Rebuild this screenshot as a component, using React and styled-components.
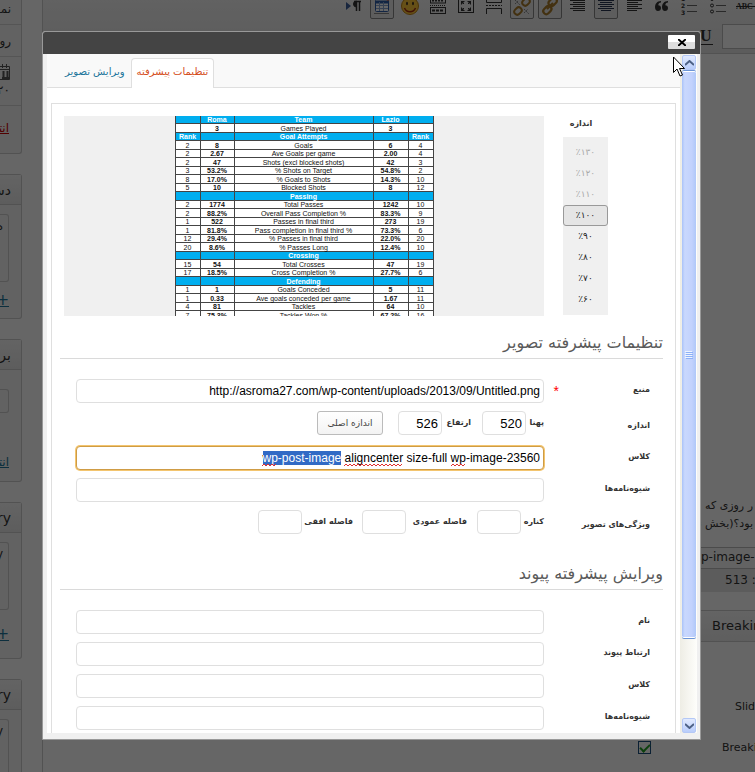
import React, { useEffect, useRef } from "react";
import styled, { createGlobalStyle } from "styled-components";

const Global = createGlobalStyle`
  * { box-sizing: border-box; }
  html, body, #root { height: 100%; }
  body { margin: 0; background: #fff; overflow: hidden; font-family: "DejaVu Sans", sans-serif; font-size: 12px; color: #333; }
  button, input { font: inherit; }
`;

const latin = `"Liberation Sans", Arial, sans-serif`;
const line = "#dfdfdf";

/* ---------- page behind the dialog ---------- */
const Page = styled.div`
  display: flex;
  height: 100vh;
  overflow: hidden;
`;
const Side = styled.aside`
  flex: none;
  width: 22px;
  margin-right: 20px;
  overflow: hidden;
  direction: rtl;
  white-space: nowrap;
`;
const MetaBox = styled.section`
  height: ${(p) => p.$h}px;
  margin-top: ${(p) => (p.$cut ? -7 : 0)}px;
  margin-bottom: 20px;
  border: 1px solid #ccc;
  border-left: 0;
  border-top-width: ${(p) => (p.$cut ? 0 : 1)}px;
  border-radius: ${(p) => (p.$cut ? "0 0 3px 0" : "0 3px 3px 0")};
  background: #f5f5f5;
`;
const MetaTitle = styled.h3`
  margin: 0 0 9px;
  height: 30px;
  padding-right: 10px;
  font-size: 14px;
  font-weight: 400;
  line-height: 30px;
  border-bottom: 1px solid #ccc;
  background: linear-gradient(#f9f9f9, #e8e8e8);
`;
const MetaRow = styled.div`
  height: 32px;
  padding-right: 10px;
  line-height: 32px;
  border-bottom: 1px solid #d5d5d5;
`;
const DateRow = styled.div`
  display: flex;
  flex-direction: column;
  height: 49px;
  padding: 6px 11px 0 0;
  line-height: 18px;
  border-bottom: 1px solid #d5d5d5;
`;
const MetaPane = styled.div`
  height: ${(p) => p.$h}px;
  margin: ${(p) => p.$top || 0}px 12px 0 0;
  padding: 2px 5px;
  line-height: 18px;
  border: 1px solid #ccc;
  border-left: 0;
  border-radius: 0 3px 3px 0;
`;
const MetaLink = styled.a`
  display: block;
  padding: ${(p) => p.$top}px 12px 0;
  font-size: ${(p) => (p.$add ? 15 : 12)}px;
  line-height: 20px;
  color: ${(p) => (p.$red ? "#c00" : "#21759b")};
`;
const Main = styled.main`
  flex: 1;
  min-width: 0;
  display: flex;
  flex-direction: column;
  overflow: hidden;
  border-left: 1px solid #ccc;
`;
const Toolbars = styled.div`
  flex: none;
  height: 54px;
  background: linear-gradient(#f4f4f4, #e6e6e6);
  border-bottom: 1px solid #ccc;
`;
const ToolRow = styled.div`
  display: flex;
  gap: 4px;
  height: 19px;
  padding-left: 299px;
  align-items: flex-end;
`;
const Tool = styled.button`
  flex: none;
  display: grid;
  place-items: center;
  width: 24px;
  height: 24px;
  padding: 0;
  border: 1px solid ${(p) => (p.$on ? "#888" : "transparent")};
  border-radius: 2px;
  background: ${(p) => (p.$on ? "#e9e9e9" : "none")};
  svg { display: block; }
`;
const ToolRowTwo = styled.div`
  display: flex;
  justify-content: flex-end;
  gap: 4px;
  padding-top: 5px;
`;
const FormatBox = styled.div`
  width: 33px;
  height: 25px;
  border: 1px solid #bbb;
  border-right: 0;
  background: #fff;
`;
const Story = styled.div`
  flex: none;
  height: 493px;
  padding: 443px 2px 0 0;
  direction: rtl;
  font-size: 11px;
  line-height: 18px;
  white-space: nowrap;
`;
const Strip = styled.div`
  flex: none;
  height: ${(p) => p.$h}px;
  padding-left: ${(p) => p.$x}px;
  border-top: 1px solid #bbb;
  background: ${(p) => p.$bg};
  font-size: 12px;
  line-height: ${(p) => p.$h - 2}px;
  white-space: nowrap;
`;
const PanelTitle = styled.h3`
  flex: none;
  margin: 18px 0 44px;
  height: 32px;
  padding-left: 669px;
  border: solid #ccc;
  border-width: 1px 0;
  background: linear-gradient(#f9f9f9, #ececec);
  font-size: 13px;
  font-weight: 400;
  line-height: 30px;
`;
const Option = styled.label`
  flex: none;
  display: flex;
  align-items: center;
  height: 41px;
  padding-left: ${(p) => p.$x}px;
  font-size: 11px;
  white-space: nowrap;
`;
const Tick = styled.input`
  flex: none;
  margin: 0 71px 0 0;
  width: 13px;
  height: 13px;
  appearance: none;
  border: 1px solid #1c5180;
  background: #fff;
  display: grid;
  place-items: center;
  &:checked::before {
    content: "";
    width: 4px;
    height: 8px;
    margin-top: -2px;
    border: solid #21a121;
    border-width: 0 2px 2px 0;
    transform: rotate(45deg);
  }
`;
const Shade = styled.div`
  position: fixed;
  inset: 0;
  background: rgba(0, 0, 0, 0.6);
`;

/* ---------- dialog ---------- */
const Dialog = styled.div`
  position: fixed;
  inset: 31px 54px 32px 42px;
  display: flex;
  flex-direction: column;
  border: 1px solid #999;
  border-radius: 3px 3px 0 0;
  background: #f0f0f0;
  overflow: hidden;
`;
const TitleBar = styled.div`
  flex: none;
  display: flex;
  justify-content: flex-end;
  height: 22px;
  padding: 3px 5px;
  background: #444;
`;
const Close = styled.button`
  display: grid;
  place-items: center;
  width: 27px;
  height: 14px;
  padding: 0;
  border: 0;
  border-radius: 1px;
  background: linear-gradient(#fff 50%, #dedede 50%);
`;
const Frame = styled.div`
  flex: 1;
  min-height: 0;
  display: flex;
  margin: 0 3px 6px 4px;
  background: #fff;
`;
const Content = styled.div`
  flex: 1;
  min-width: 0;
  overflow: hidden;
`;
const Tabs = styled.nav`
  display: flex;
  align-items: flex-end;
  height: 34px;
  padding-left: 12px;
  border-bottom: 1px solid ${line};
  background: #f9f9f9;
`;
const Tab = styled.a`
  height: ${(p) => (p.$on ? 30 : 29)}px;
  margin-bottom: ${(p) => (p.$on ? -1 : 0)}px;
  padding: 0 5px;
  font-size: 10px;
  line-height: 26px;
  text-decoration: none;
  white-space: nowrap;
  color: ${(p) => (p.$on ? "#d54e21" : "#21759b")};
  border: 1px solid ${(p) => (p.$on ? line : "transparent")};
  border-bottom: 0;
  border-radius: 4px 4px 0 0;
  background: ${(p) => (p.$on ? "#fff" : "none")};
`;
const Panel = styled.div`
  margin: 15px 4px 0;
  border: 1px solid ${line};
`;
const Preview = styled.div`
  display: flex;
  gap: 19px;
  padding: 12px 12px 0;
`;
const Picture = styled.div`
  flex: 0 1 480px;
  height: 200px;
  overflow: hidden;
  background: #f0f0f0;
`;
const Stats = styled.table`
  width: 258px;
  height: 204px;
  margin: 0 auto;
  table-layout: fixed;
  border-collapse: collapse;
  background: #fff;
  font: 7px/7px ${latin};
  color: #111;
  text-align: center;
  td, th { padding: 0; border: 1px solid #444; white-space: nowrap; font-weight: 400; }
  tr:first-child > * { border-top: 0; }
  td:nth-child(2), td:nth-child(4) { font-weight: 700; }
`;
const Band = styled.tr`
  background: #00aeef;
  th { color: #fff; font-weight: 700; }
`;
const Sizes = styled.div`
  width: 45px;
  text-align: center;
`;
const SizesTitle = styled.div`
  height: 21px;
  padding-right: 9px;
  font-size: 8px;
  font-weight: 700;
  line-height: 16px;
  white-space: nowrap;
`;
const SizeList = styled.div`
  display: flex;
  flex-direction: column;
  padding: 5px 0;
  background: #f0f0f0;
`;
const Size = styled.button`
  height: 21px;
  padding: 0;
  border: 1px solid ${(p) => (p.$on ? "#999" : "transparent")};
  border-radius: 3px;
  background: ${(p) => (p.$on ? "#e5e5e5" : "none")};
  color: ${(p) => (p.disabled ? "#aaa" : "#222")};
  font-size: 9px;
  line-height: 17px;
`;
const Section = styled.form`
  direction: rtl;
  margin: ${(p) => p.$top}px 12px 0 8px;
`;
const Heading = styled.h2`
  margin: 0 0 20px;
  height: 32px;
  font-size: 16px;
  font-weight: 400;
  line-height: 32px;
  color: #5a5a5a;
  border-bottom: 1px solid #dadada;
`;
const Row = styled.div`
  display: grid;
  grid-template-columns: 90px 16px minmax(0, 1fr);
  align-items: start;
  height: ${(p) => (p.$tall ? 35 : 32)}px;
  padding: 0 13px 0 16px;
`;
const Label = styled.label`
  font-size: 8px;
  font-weight: 700;
  line-height: ${(p) => (p.$low ? 30 : 22)}px;
  color: #333;
  white-space: nowrap;
`;
const Star = styled.span`
  padding-right: 1px;
  color: #f00;
  font: 14px/24px ${latin};
`;
const Field = styled.input`
  display: block;
  width: 100%;
  height: 24px;
  padding: 0 3px;
  direction: ltr;
  text-align: right;
  font: 12px/18px ${latin};
  color: #000;
  background: #fff;
  border: 1px solid ${line};
  border-radius: 4px;
  outline: 0;
  &:focus { border-color: #cf9c45; box-shadow: 0 0 0 1px #f3c56f; }
  &::selection { background: #316ac5; color: #fff; }
`;
const Small = styled(Field)`
  flex: none;
  width: 44px;
  margin-left: ${(p) => p.$after}px;
  font-size: 13px;
`;
const Group = styled.div`
  display: flex;
`;
const Caption = styled.label`
  flex: none;
  width: ${(p) => p.$w}px;
  font-size: 8px;
  font-weight: 700;
  line-height: 24px;
  white-space: nowrap;
`;
const Original = styled.button`
  flex: none;
  width: 66px;
  height: 24px;
  padding: 0;
  border: 1px solid #bbb;
  border-radius: 3px;
  background: linear-gradient(#fff, #f3f3f3);
  color: #444;
  font-size: 9px;
  white-space: nowrap;
`;
const Spelled = styled.div`
  position: relative;
`;
const Squiggle = styled.svg`
  position: absolute;
  right: 4px;
  top: 17px;
  pointer-events: none;
`;

/* ---------- scroll bar ---------- */
const Bar = styled.div`
  flex: none;
  display: flex;
  flex-direction: column;
  width: 17px;
  padding: 1px 1px 0 2px;
  background: linear-gradient(90deg, #eeede5, #fefefb);
`;
const Arrow = styled.button`
  flex: none;
  display: grid;
  place-items: center;
  height: 15px;
  padding: 0;
  border: 1px solid #b4c8f6;
  border-radius: 2px;
  background: linear-gradient(#e1eafe, #b9cdfb);
`;
const Thumb = styled.div`
  flex: 0 1 569px;
  display: grid;
  place-items: center;
  margin-bottom: auto;
  border: solid #6c95d6;
  border-width: 1px 0;
  border-radius: 2px;
  box-shadow: inset 0 1px #fff, inset 0 -1px #fff;
  background: linear-gradient(90deg, #a9c2f8, #c9d8fd 20%, #c2d2fd 70%, #b0c8f8);
`;
const Pointer = styled.svg`
  position: fixed;
  top: 56px;
  right: 70px;
`;

const lines = (rows) => rows.map(([x1, x2, y]) => `M${x1} ${y}.5H${x2}`).join("");
const Icon = ({ children }) => (
  <svg width="20" height="20" viewBox="0 0 20 20" fill="none" stroke="#333">{children}</svg>
);
const align = (rows, color = "#333") => <path stroke={color} d={lines(rows)} />;
const chain = (
  <g stroke="#a87c2c" strokeWidth="2" fill="none">
    <rect x="10" y="2" width="8" height="6" rx="3" transform="rotate(-45 14 5)" />
    <rect x="2" y="11" width="8" height="6" rx="3" transform="rotate(-45 6 14)" />
  </g>
);
const quoteMark = (x) => `M${x + 5} 4c-4 0-6 3-6 6 0 2.500 1.200 4 3 4s3-1.200 3-3-1.200-2.700-2.700-2.700c0-1.500 1-2.500 2.700-2.700z`;

const tools = [
  ["Direction", false, <><path d="M2 5l5 4-5 4z" fill="#3d5f9c" stroke="none" /><path d="M12.500 4v10M15.500 4v10M10 4.500h7" strokeWidth="1.500" /><path d="M12.500 4a3 3 0 000 6z" fill="#333" /></>],
  ["Table", true, <><rect x="3.500" y="2.500" width="13" height="12" rx="1" fill="#fff" stroke="#2f5ea8" /><path d="M4 5h12" stroke="#2f5ea8" strokeWidth="3" /><path d="M4 8.500h12M4 11.500h12M7.500 5v9M11.500 5v9" stroke="#8aa6d0" /><path d="M13 2l3-4 3 2-3 4z" fill="#d65332" stroke="none" /><path d="M2 16.500h15" stroke="#888" /></>],
  ["Smiley", false, <><circle cx="10" cy="9" r="8.500" fill="#ffc83a" stroke="#c08415" /><ellipse cx="7" cy="6.500" rx="1" ry="1.800" fill="#432" stroke="none" /><ellipse cx="13" cy="6.500" rx="1" ry="1.800" fill="#432" stroke="none" /><path d="M4.500 11c2 5 9 5 11 0" stroke="#a02b10" strokeWidth="1.500" /></>],
  ["Row", false, <><rect x="2.500" y="-1" width="15" height="7" /><rect x="2.500" y="10.500" width="15" height="6" /><path d="M4 3.500h12" strokeDasharray="2 1" strokeWidth="2" /><path d="M2 8.500h16" strokeDasharray="1 1" /><path d="M4 13.500h12" strokeDasharray="3 1" strokeWidth="2" /></>],
  ["Fullscreen", false, <><rect x="2.500" y="1.500" width="15" height="14" /><path d="M5 4h4l-4 4zM15 4h-4l4 4zM5 14h4l-4-4zM15 14h-4l4-4z" fill="#333" stroke="none" /><path d="M6 5l2 2M14 5l-2 2M6 13l2-2M14 13l-2-2" /></>],
  ["Page break", false, <><path d="M2.500 0v5.500h15V0M2.500 17v-5.500h15V17" /><path d="M2 8.500h16" strokeDasharray="2 1" /></>],
  ["Unlink", true, <>{chain}<path d="M3 3l5 5M3 7l3-3M12 12l5 5M12 16l4-4" stroke="#888" strokeDasharray="2 1" /></>],
  ["Link", true, <><g stroke="#a87c2c" strokeWidth="2.200"><rect x="9" y="2" width="9" height="6" rx="3" transform="rotate(-45 13 6)" /><rect x="2" y="10" width="9" height="6" rx="3" transform="rotate(-45 7 12)" /><path d="M7 12l6-6" /></g></>],
  ["Align right", false, align([[5, 17, 1], [2, 17, 3], [5, 17, 5], [2, 17, 7], [5, 17, 9], [2, 17, 11], [5, 17, 13]])],
  ["Align center", true, align([[4, 16, 1], [2, 18, 3], [4, 16, 5], [2, 18, 7], [4, 16, 9], [2, 18, 11], [5, 15, 13]], "#2a3550")],
  ["Align left", false, align([[3, 14, 1], [3, 18, 3], [3, 14, 5], [3, 18, 7], [3, 14, 9], [3, 18, 11], [3, 13, 13]])],
  ["Quote", false, <path d={quoteMark(4) + quoteMark(11)} fill="#333" stroke="none" />],
  ["Numbered list", false, <><path d="M7 2.500h10M7 8.500h10M7 14.500h10" stroke="#666" /><g fill="#333" stroke="none" fontFamily="DejaVu Sans" fontSize="6" fontWeight="700"><text x="1" y="4">1</text><text x="1" y="11">2</text><text x="1" y="18">3</text></g></>],
  ["Bulleted list", false, <><path d="M8 2.500h10M8 8.500h10M8 14.500h10" stroke="#666" /><circle cx="4" cy="2" r="1.500" /><circle cx="4" cy="8.500" r="1.500" /><circle cx="4" cy="14.500" r="1.500" /></>],
  ["Strikethrough", false, <><text x="0" y="12" fill="#333" stroke="none" fontFamily="Liberation Serif" fontSize="8" fontWeight="700">ABC</text><path d="M0 9.500h20" /></>],
];

const stats = [
  ["h", "", "Roma", "Team", "Lazio", ""],
  ["r", "", "3", "Games Played", "3", ""],
  ["h", "Rank", "", "Goal Attempts", "", "Rank"],
  ["r", "2", "8", "Goals", "6", "4"],
  ["r", "2", "2.67", "Ave Goals per game", "2.00", "4"],
  ["r", "2", "47", "Shots (excl blocked shots)", "42", "3"],
  ["r", "3", "53.2%", "% Shots on Target", "54.8%", "2"],
  ["r", "8", "17.0%", "% Goals to Shots", "14.3%", "10"],
  ["r", "5", "10", "Blocked Shots", "8", "12"],
  ["h", "", "", "Passing", "", ""],
  ["r", "2", "1774", "Total Passes", "1242", "10"],
  ["r", "2", "88.2%", "Overall Pass Completion %", "83.3%", "9"],
  ["r", "1", "522", "Passes in final third", "273", "19"],
  ["r", "1", "81.8%", "Pass completion in final third %", "73.3%", "6"],
  ["r", "12", "29.4%", "% Passes in final third", "22.0%", "20"],
  ["r", "20", "8.6%", "% Passes Long", "12.4%", "10"],
  ["h", "", "", "Crossing", "", ""],
  ["r", "15", "54", "Total Crosses", "47", "19"],
  ["r", "17", "18.5%", "Cross Completion %", "27.7%", "6"],
  ["h", "", "", "Defending", "", ""],
  ["r", "1", "1", "Goals Conceded", "5", "11"],
  ["r", "1", "0.33", "Ave goals conceded per game", "1.67", "11"],
  ["r", "4", "81", "Tackles", "64", "10"],
  ["r", "7", "75.3%", "Tackles Won %", "67.2%", "16"],
];

const sizes = ["۱۳۰", "۱۲۰", "۱۱۰", "۱۰۰", "۹۰", "۸۰", "۷۰", "۶۰"];

const wave = (from, to) => {
  let d = `M${from} 3`;
  for (let x = from + 2, up = true; x <= to; x += 2, up = !up) d += `L${x} ${up ? 1 : 3}`;
  return d;
};

function StatsTable() {
  return (
    <Stats>
      <colgroup><col width="25" /><col width="34" /><col width="139" /><col width="35" /><col width="25" /></colgroup>
      <tbody>
        {stats.map(([kind, ...cells], i) =>
          kind === "h"
            ? <Band key={i}>{cells.map((c, j) => <th key={j}>{c}</th>)}</Band>
            : <tr key={i}>{cells.map((c, j) => <td key={j}>{c}</td>)}</tr>
        )}
      </tbody>
    </Stats>
  );
}

function TextRow({ id, label, value = "", required }) {
  return (
    <Row>
      <Label htmlFor={id}>{label}</Label>
      <Star>{required ? "*" : ""}</Star>
      <Field id={id} defaultValue={value} />
    </Row>
  );
}

function ClassRow() {
  const ref = useRef(null);
  useEffect(() => {
    ref.current.focus();
    ref.current.setSelectionRange(0, 13);
  }, []);
  return (
    <Row>
      <Label htmlFor="img-class">کلاس</Label>
      <Star />
      <Spelled>
        <Field id="img-class" ref={ref} spellCheck={false} defaultValue="wp-post-image aligncenter size-full wp-image-23560" />
        <Squiggle width="278" height="4" viewBox="0 0 278 4" fill="none" stroke="#e03030">
          <path d={wave(0, 15) + wave(82, 141) + wave(189, 204)} />
        </Squiggle>
      </Spelled>
    </Row>
  );
}

function Backdrop() {
  return (
    <Page>
      <Side>
        <MetaBox $h={161} $cut>
          <MetaRow>نما</MetaRow>
          <MetaRow>روز</MetaRow>
          <DateRow>
            <svg width="16" height="18" viewBox="0 0 16 18" fill="none" stroke="#555"><path d="M1.500 3.500h14v13h-14zM4.500 1v4M8.500 1v4M12.500 1v4M2 6.500h13" /><path d="M9.500 8v7M13.500 8v7M8 15h7" strokeWidth="2" /></svg>
            <span>۲۰ آ</span>
          </DateRow>
          <MetaLink href="#trash" $top={12} $red>انتقال</MetaLink>
        </MetaBox>
        <MetaBox $h={145}>
          <MetaTitle>دسته</MetaTitle>
          <MetaPane $h={68}>ه</MetaPane>
          <MetaLink href="#add" $top={8} $add>+</MetaLink>
        </MetaBox>
        <MetaBox $h={143}>
          <MetaTitle>برچ</MetaTitle>
          <MetaPane $h={24} $top={19} />
          <MetaLink href="#tags" $top={39}>انتخاب</MetaLink>
        </MetaBox>
        <MetaBox $h={157}>
          <MetaTitle>ry</MetaTitle>
          <MetaPane $h={68}>y</MetaPane>
          <MetaLink href="#add-one" $top={14} $add>+</MetaLink>
        </MetaBox>
        <MetaBox $h={157}>
          <MetaTitle>ry</MetaTitle>
          <MetaPane $h={68}>y</MetaPane>
        </MetaBox>
      </Side>
      <Main>
        <Toolbars>
          <ToolRow>
            {tools.map(([name, on, art]) => (
              <Tool key={name} type="button" aria-label={name} $on={on}><Icon>{art}</Icon></Tool>
            ))}
          </ToolRow>
          <ToolRowTwo>
            <Tool type="button" aria-label="Underline">
              <Icon><text x="4" y="15" fill="#333" stroke="none" fontFamily="Liberation Serif" fontSize="16" fontWeight="700">U</text><path d="M4 18.500h13" /></Icon>
            </Tool>
            <FormatBox />
          </ToolRowTwo>
        </Toolbars>
        <Story>
          <div>ر روزی که</div>
          <div>بود؟(بخش نم</div>
        </Story>
        <Strip $h={21} $x={658} $bg="#f8f8f8">p-image-2</Strip>
        <Strip $h={24} $x={682} $bg="#e6e6e6">513 :</Strip>
        <PanelTitle>Breaking</PanelTitle>
        <Option $x={692}>Slider</Option>
        <Option $x={595}><Tick type="checkbox" defaultChecked />Breaking</Option>
      </Main>
    </Page>
  );
}

export default function App() {
  return (
    <>
      <Global />
      <Backdrop />
      <Shade />
      <Dialog role="dialog">
        <TitleBar>
          <Close type="button" aria-label="Close">
            <svg width="8" height="7" viewBox="0 0 8 7" stroke="#000" strokeWidth="2"><path d="M0 0l8 7M8 0L0 7" /></svg>
          </Close>
        </TitleBar>
        <Frame>
          <Content>
            <Tabs>
              <Tab href="#edit">ویرایش تصویر</Tab>
              <Tab href="#advanced" $on>تنظیمات پیشرفته</Tab>
            </Tabs>
            <Panel>
              <Preview>
                <Picture><StatsTable /></Picture>
                <Sizes>
                  <SizesTitle>اندازه</SizesTitle>
                  <SizeList>
                    {sizes.map((n, i) => (
                      <Size key={n} type="button" disabled={i < 3} $on={i === 3}>٪{n}</Size>
                    ))}
                  </SizeList>
                </Sizes>
              </Preview>
              <Section $top={11}>
                <Heading>تنظیمات پیشرفته تصویر</Heading>
                <TextRow id="src" label="منبع" value="http://asroma27.com/wp-content/uploads/2013/09/Untitled.png" required />
                <Row $tall>
                  <Label $low>اندازه</Label>
                  <Star />
                  <Group>
                    <Caption $w={18} htmlFor="w">پهنا</Caption>
                    <Small id="w" $after={11} defaultValue="520" />
                    <Caption $w={29} htmlFor="h">ارتفاع</Caption>
                    <Small id="h" $after={15} defaultValue="526" />
                    <Original type="button">اندازه اصلی</Original>
                  </Group>
                </Row>
                <ClassRow />
                <TextRow id="img-style" label="شیوه‌نامه‌ها" />
                <Row>
                  <Label $low>ویژگی‌های تصویر</Label>
                  <Star />
                  <Group>
                    <Caption $w={23} htmlFor="border">کناره</Caption>
                    <Small id="border" $after={10} />
                    <Caption $w={61} htmlFor="vspace">فاصله عمودی</Caption>
                    <Small id="vspace" $after={9} />
                    <Caption $w={51} htmlFor="hspace">فاصله افقی</Caption>
                    <Small id="hspace" $after={0} />
                  </Group>
                </Row>
              </Section>
              <Section $top={16}>
                <Heading>ویرایش پیشرفته پیوند</Heading>
                <TextRow id="link-name" label="نام" />
                <TextRow id="link-rel" label="ارتباط پیوند" />
                <TextRow id="link-class" label="کلاس" />
                <TextRow id="link-style" label="شیوه‌نامه‌ها" />
              </Section>
            </Panel>
          </Content>
          <Bar>
            <Arrow type="button" aria-label="Scroll up"><svg width="9" height="6" viewBox="0 0 9 6" fill="none" stroke="#4d6185" strokeWidth="2"><path d="M0 5l4.500-4L9 5" /></svg></Arrow>
            <Thumb><svg width="8" height="8" viewBox="0 0 8 8"><path d="M0 .5h7M0 2.500h7M0 4.500h7M0 6.500h7" stroke="#eef4fe" /><path d="M1 1.500h7M1 3.500h7M1 5.500h7M1 7.500h7" stroke="#8cb0f8" /></svg></Thumb>
            <Arrow type="button" aria-label="Scroll down"><svg width="9" height="6" viewBox="0 0 9 6" fill="none" stroke="#4d6185" strokeWidth="2"><path d="M0 1l4.500 4L9 1" /></svg></Arrow>
          </Bar>
        </Frame>
      </Dialog>
      <Pointer width="12" height="21" viewBox="0 0 12 21" fill="#fff" stroke="#000"><path d="M.5 1v15.500l3.500-3.500 3 7 2.500-1-3-6.500h5z" /></Pointer>
    </>
  );
}
